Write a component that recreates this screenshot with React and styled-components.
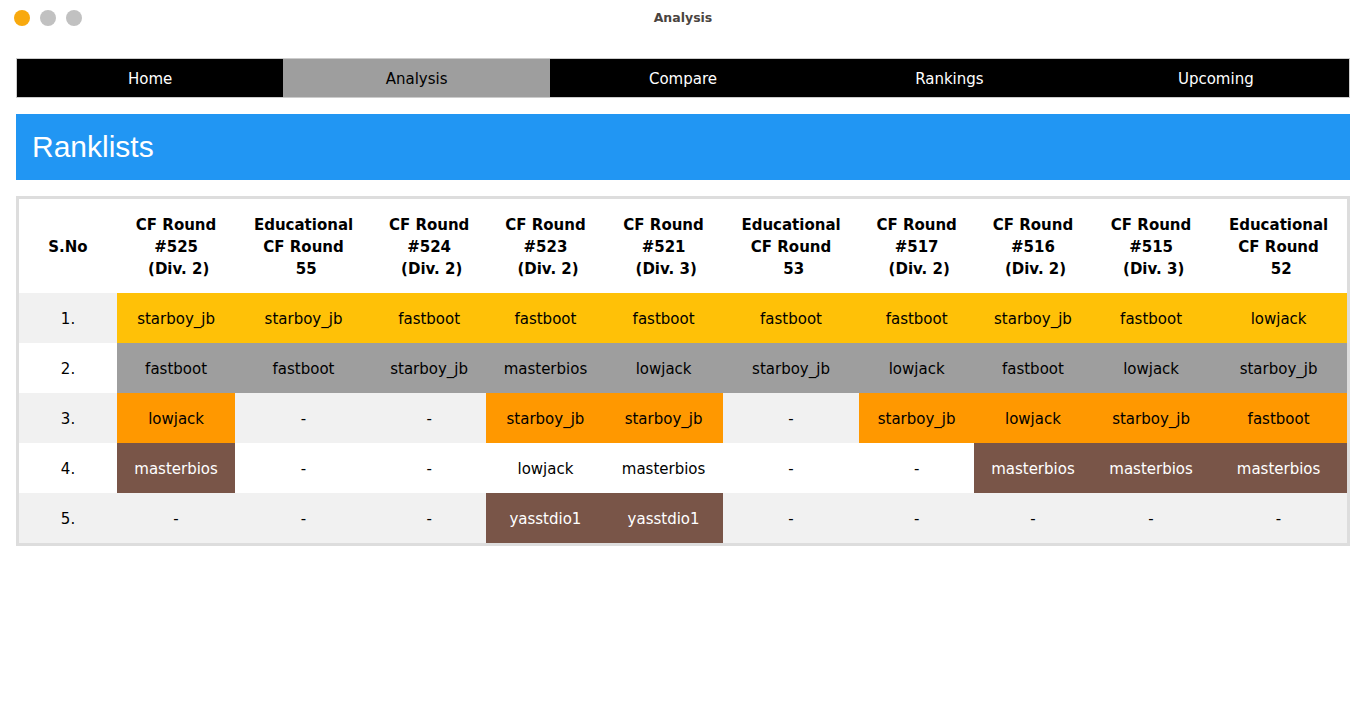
import React from "react";
import styled, { createGlobalStyle } from "styled-components";

const GlobalStyle = createGlobalStyle`
  html, body {
    margin: 0;
    padding: 0;
    background: #fff;
  }
  body {
    font-family: "DejaVu Sans", Verdana, sans-serif;
    font-size: 15px;
    line-height: 1.5;
    color: #000;
  }
`;

const tabs = ["Home", "Analysis", "Compare", "Rankings", "Upcoming"];

const contests = [
  ["CF Round", "#525", "(Div. 2)"],
  ["Educational", "CF Round", "55"],
  ["CF Round", "#524", "(Div. 2)"],
  ["CF Round", "#523", "(Div. 2)"],
  ["CF Round", "#521", "(Div. 3)"],
  ["Educational", "CF Round", "53"],
  ["CF Round", "#517", "(Div. 2)"],
  ["CF Round", "#516", "(Div. 2)"],
  ["CF Round", "#515", "(Div. 3)"],
  ["Educational", "CF Round", "52"],
];

// each cell: [handle, medal] — medal picks the background colour
const ranks = [
  [["starboy_jb", "gold"], ["starboy_jb", "gold"], ["fastboot", "gold"], ["fastboot", "gold"], ["fastboot", "gold"], ["fastboot", "gold"], ["fastboot", "gold"], ["starboy_jb", "gold"], ["fastboot", "gold"], ["lowjack", "gold"]],
  [["fastboot", "silver"], ["fastboot", "silver"], ["starboy_jb", "silver"], ["masterbios", "silver"], ["lowjack", "silver"], ["starboy_jb", "silver"], ["lowjack", "silver"], ["fastboot", "silver"], ["lowjack", "silver"], ["starboy_jb", "silver"]],
  [["lowjack", "bronze"], ["-"], ["-"], ["starboy_jb", "bronze"], ["starboy_jb", "bronze"], ["-"], ["starboy_jb", "bronze"], ["lowjack", "bronze"], ["starboy_jb", "bronze"], ["fastboot", "bronze"]],
  [["masterbios", "brown"], ["-"], ["-"], ["lowjack"], ["masterbios"], ["-"], ["-"], ["masterbios", "brown"], ["masterbios", "brown"], ["masterbios", "brown"]],
  [["-"], ["-"], ["-"], ["yasstdio1", "brown"], ["yasstdio1", "brown"], ["-"], ["-"], ["-"], ["-"], ["-"]],
];

const medalColors = {
  gold: { bg: "#ffc107", fg: "#000" },
  silver: { bg: "#9e9e9e", fg: "#000" },
  bronze: { bg: "#ff9800", fg: "#000" },
  brown: { bg: "#795548", fg: "#fff" },
};

const App = () => {
  return (
    <>
      <GlobalStyle />
      <TitleBar>
        <Dots>
          <Dot color="#f8a90e" />
          <Dot color="#c1c1c1" />
          <Dot color="#c1c1c1" />
        </Dots>
        <WindowTitle>Analysis</WindowTitle>
      </TitleBar>
      <Page>
        <NavBar>
          {tabs.map(t => (
            <NavItem key={t} active={t === "Analysis"}>{t}</NavItem>
          ))}
        </NavBar>
        <Banner>Ranklists</Banner>
        <TableCard>
          <Table>
            <thead>
              <tr>
                <SerialHead>S.No</SerialHead>
                {contests.map((lines, i) => (
                  <HeadCell key={i}>
                    {lines[0]}<br />
                    {lines[1]}<br />
                    {"\u00a0" + lines[2]}
                  </HeadCell>
                ))}
              </tr>
            </thead>
            <tbody>
              {ranks.map((row, i) => (
                <Row key={i} striped={i % 2 === 0}>
                  <Cell>{i + 1}.</Cell>
                  {row.map(([name, medal], j) => (
                    <Cell key={j} medal={medal}>{name}</Cell>
                  ))}
                </Row>
              ))}
            </tbody>
          </Table>
        </TableCard>
      </Page>
    </>
  );
};

export default App;

const TitleBar = styled.div`
  position: relative;
  display: flex;
  align-items: center;
  justify-content: center;
  height: 36px;
  padding-top: 1px;
  box-sizing: border-box;
`;

const Dots = styled.div`
  position: absolute;
  left: 14px;
  top: 10px;
  display: flex;
  gap: 10px;
`;

const Dot = styled.span`
  width: 16px;
  height: 16px;
  border-radius: 50%;
  background: ${({ color }) => color};
`;

const WindowTitle = styled.div`
  font-family: "DejaVu Sans", sans-serif;
  font-weight: bold;
  font-size: 12.5px;
  color: #4a4440;
`;

const Page = styled.div`
  padding: 22px 16px 16px;
  display: flex;
  flex-direction: column;
  gap: 16px;
`;

const NavBar = styled.div`
  display: grid;
  grid-template-columns: repeat(5, 1fr);
  border: 1px solid #cccccc;
  background: #000;
`;

const NavItem = styled.div`
  text-align: center;
  padding: 9px 0 7px;
  line-height: 22px;
  font-size: 15px;
  background: ${({ active }) => active ? "#9e9e9e" : "#000"};
  color: ${({ active }) => active ? "#000" : "#fff"};
`;

const Banner = styled.div`
  height: 66px;
  display: flex;
  align-items: center;
  padding: 0 16px 2px;
  box-sizing: border-box;
  background: #2196f3;
  color: #fff;
  font-family: "Liberation Sans", Arial, sans-serif;
  font-size: 30px;
`;

const TableCard = styled.div`
  border: 3px solid #dddddd;
`;

const Table = styled.table`
  width: 100%;
  border-collapse: collapse;
  border-spacing: 0;
`;

const HeadCell = styled.th`
  padding: 15px 8px 13px;
  font-weight: bold;
  line-height: 22px;
  text-align: center;
  vertical-align: middle;
`;

const SerialHead = styled(HeadCell)`
  width: 82px;
`;

const Row = styled.tr`
  background: ${({ striped }) => striped ? "#f1f1f1" : "#fff"};
`;

const Cell = styled.td`
  padding: 15px 8px 13px;
  line-height: 22px;
  text-align: center;
  white-space: nowrap;
  background: ${({ medal }) => medal ? medalColors[medal].bg : "transparent"};
  color: ${({ medal }) => medal ? medalColors[medal].fg : "#000"};
`;
